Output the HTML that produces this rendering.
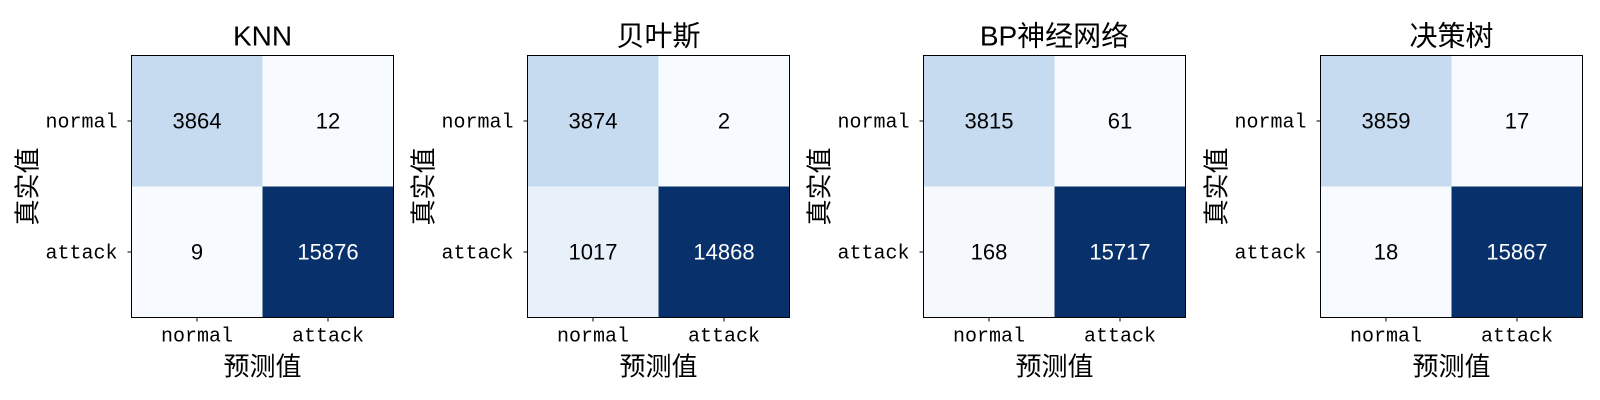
<!DOCTYPE html>
<html><head><meta charset="utf-8"><style>
html,body{margin:0;padding:0;background:#fff;}
svg{display:block}
text{font-family:"Liberation Sans","Noto Sans CJK SC",sans-serif;fill:#000}
.t{font-family:"Liberation Mono","Noto Sans CJK SC",monospace;font-size:20px}
.n{font-size:22px}
.ti{font-size:28px}
.l{font-size:26px;font-family:"Noto Sans CJK SC","WenQuanYi Zen Hei",sans-serif}
.ct{font-size:28px;font-family:"Noto Sans CJK SC","WenQuanYi Zen Hei",sans-serif}
</style></head><body>
<svg width="1600" height="400" xmlns="http://www.w3.org/2000/svg">
<g transform="translate(131.5,55.5)">
<rect x="0" y="0" width="131" height="131" fill="#c6dbef"/>
<rect x="131" y="0" width="131" height="131" fill="#f7fbff"/>
<rect x="0" y="131" width="131" height="131" fill="#f7fbff"/>
<rect x="131" y="131" width="131" height="131" fill="#08306b"/>
<rect x="0" y="0" width="262" height="262" fill="none" stroke="#000" stroke-width="1"/>
<text class="ti" x="131" y="-10" text-anchor="middle">KNN</text>
<text class="n" x="65.5" y="73" text-anchor="middle">3864</text>
<text class="n" x="196.5" y="73" text-anchor="middle">12</text>
<text class="n" x="65.5" y="204" text-anchor="middle">9</text>
<text class="n" x="196.5" y="204" text-anchor="middle" style="fill:#fff">15876</text>
<line x1="-4" y1="65.5" x2="0" y2="65.5" stroke="#000"/>
<line x1="-4" y1="196.5" x2="0" y2="196.5" stroke="#000"/>
<line x1="65.5" y1="262" x2="65.5" y2="266" stroke="#000"/>
<line x1="196.5" y1="262" x2="196.5" y2="266" stroke="#000"/>
<text class="t" x="-14" y="72" text-anchor="end">normal</text>
<text class="t" x="-14" y="203" text-anchor="end">attack</text>
<text class="t" x="65.5" y="286" text-anchor="middle">normal</text>
<text class="t" x="196.5" y="286" text-anchor="middle">attack</text>
<text class="l" x="131" y="320" text-anchor="middle">预测值</text>
<text class="l" transform="translate(-95,131) rotate(-90)" text-anchor="middle">真实值</text>
</g>
<g transform="translate(527.5,55.5)">
<rect x="0" y="0" width="131" height="131" fill="#c6dbef"/>
<rect x="131" y="0" width="131" height="131" fill="#f7fbff"/>
<rect x="0" y="131" width="131" height="131" fill="#e8f1fa"/>
<rect x="131" y="131" width="131" height="131" fill="#08306b"/>
<rect x="0" y="0" width="262" height="262" fill="none" stroke="#000" stroke-width="1"/>
<text class="ct" x="131" y="-10" text-anchor="middle">贝叶斯</text>
<text class="n" x="65.5" y="73" text-anchor="middle">3874</text>
<text class="n" x="196.5" y="73" text-anchor="middle">2</text>
<text class="n" x="65.5" y="204" text-anchor="middle">1017</text>
<text class="n" x="196.5" y="204" text-anchor="middle" style="fill:#fff">14868</text>
<line x1="-4" y1="65.5" x2="0" y2="65.5" stroke="#000"/>
<line x1="-4" y1="196.5" x2="0" y2="196.5" stroke="#000"/>
<line x1="65.5" y1="262" x2="65.5" y2="266" stroke="#000"/>
<line x1="196.5" y1="262" x2="196.5" y2="266" stroke="#000"/>
<text class="t" x="-14" y="72" text-anchor="end">normal</text>
<text class="t" x="-14" y="203" text-anchor="end">attack</text>
<text class="t" x="65.5" y="286" text-anchor="middle">normal</text>
<text class="t" x="196.5" y="286" text-anchor="middle">attack</text>
<text class="l" x="131" y="320" text-anchor="middle">预测值</text>
<text class="l" transform="translate(-95,131) rotate(-90)" text-anchor="middle">真实值</text>
</g>
<g transform="translate(923.5,55.5)">
<rect x="0" y="0" width="131" height="131" fill="#c6dbef"/>
<rect x="131" y="0" width="131" height="131" fill="#f6faff"/>
<rect x="0" y="131" width="131" height="131" fill="#f5f9fe"/>
<rect x="131" y="131" width="131" height="131" fill="#08306b"/>
<rect x="0" y="0" width="262" height="262" fill="none" stroke="#000" stroke-width="1"/>
<text class="ti" x="131" y="-10" text-anchor="middle">BP<tspan style="font-family:'Noto Sans CJK SC',sans-serif">神经网络</tspan></text>
<text class="n" x="65.5" y="73" text-anchor="middle">3815</text>
<text class="n" x="196.5" y="73" text-anchor="middle">61</text>
<text class="n" x="65.5" y="204" text-anchor="middle">168</text>
<text class="n" x="196.5" y="204" text-anchor="middle" style="fill:#fff">15717</text>
<line x1="-4" y1="65.5" x2="0" y2="65.5" stroke="#000"/>
<line x1="-4" y1="196.5" x2="0" y2="196.5" stroke="#000"/>
<line x1="65.5" y1="262" x2="65.5" y2="266" stroke="#000"/>
<line x1="196.5" y1="262" x2="196.5" y2="266" stroke="#000"/>
<text class="t" x="-14" y="72" text-anchor="end">normal</text>
<text class="t" x="-14" y="203" text-anchor="end">attack</text>
<text class="t" x="65.5" y="286" text-anchor="middle">normal</text>
<text class="t" x="196.5" y="286" text-anchor="middle">attack</text>
<text class="l" x="131" y="320" text-anchor="middle">预测值</text>
<text class="l" transform="translate(-95,131) rotate(-90)" text-anchor="middle">真实值</text>
</g>
<g transform="translate(1320.5,55.5)">
<rect x="0" y="0" width="131" height="131" fill="#c6dbef"/>
<rect x="131" y="0" width="131" height="131" fill="#f7fbff"/>
<rect x="0" y="131" width="131" height="131" fill="#f7fbff"/>
<rect x="131" y="131" width="131" height="131" fill="#08306b"/>
<rect x="0" y="0" width="262" height="262" fill="none" stroke="#000" stroke-width="1"/>
<text class="ct" x="131" y="-10" text-anchor="middle">决策树</text>
<text class="n" x="65.5" y="73" text-anchor="middle">3859</text>
<text class="n" x="196.5" y="73" text-anchor="middle">17</text>
<text class="n" x="65.5" y="204" text-anchor="middle">18</text>
<text class="n" x="196.5" y="204" text-anchor="middle" style="fill:#fff">15867</text>
<line x1="-4" y1="65.5" x2="0" y2="65.5" stroke="#000"/>
<line x1="-4" y1="196.5" x2="0" y2="196.5" stroke="#000"/>
<line x1="65.5" y1="262" x2="65.5" y2="266" stroke="#000"/>
<line x1="196.5" y1="262" x2="196.5" y2="266" stroke="#000"/>
<text class="t" x="-14" y="72" text-anchor="end">normal</text>
<text class="t" x="-14" y="203" text-anchor="end">attack</text>
<text class="t" x="65.5" y="286" text-anchor="middle">normal</text>
<text class="t" x="196.5" y="286" text-anchor="middle">attack</text>
<text class="l" x="131" y="320" text-anchor="middle">预测值</text>
<text class="l" transform="translate(-95,131) rotate(-90)" text-anchor="middle">真实值</text>
</g>
</svg>
</body></html>
